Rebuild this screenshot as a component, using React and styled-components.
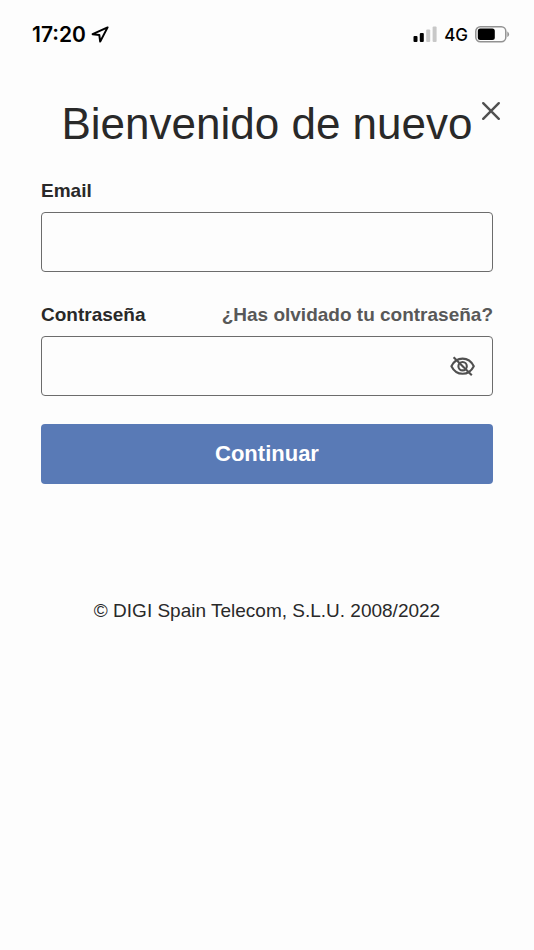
import React from "react";
import styled, { createGlobalStyle } from "styled-components";

const Global = createGlobalStyle`
  *, *::before, *::after { box-sizing: border-box; }
  body { margin: 0; background: #fdfdfd; color: #292929; font-family: "Liberation Sans", Arial, sans-serif; }
`;

const StatusBar = styled.header`
  display: flex;
  align-items: center;
  justify-content: space-between;
  padding: 23px 24px 21px 32px;
  color: #000;
  font-family: Inter, sans-serif;
`;

const StatusGroup = styled.div`
  display: flex;
  align-items: center;
  gap: ${(p) => p.$gap}px;
`;

const Clock = styled.time`
  font-size: 21px;
  line-height: 24px;
  font-weight: 600;
`;

const Network = styled.span`
  font-size: 17px;
  line-height: 24px;
  font-weight: 500;
`;

const Page = styled.main`
  padding: 32px 41px;
`;

const TitleRow = styled.div`
  position: relative;
`;

const Title = styled.h1`
  margin: 0;
  font-size: 44px;
  line-height: 48px;
  font-weight: 400;
  text-align: center;
  white-space: nowrap;
`;

const CloseButton = styled.button`
  position: absolute;
  top: 0;
  right: -8px;
  display: flex;
  padding: 0;
  border: 0;
  background: none;
  color: #505050;
  cursor: pointer;
`;

const Form = styled.form`
  display: flex;
  flex-direction: column;
  gap: 28px;
  margin-top: 28px;
`;

const Field = styled.div`
  display: flex;
  flex-direction: column;
  gap: 7px;
`;

const FieldHeader = styled.div`
  display: flex;
  justify-content: space-between;
  padding-top: 1px;
  font-size: 19px;
  line-height: 28px;
  font-weight: 700;
`;

const ForgotLink = styled.a`
  color: #585858;
  text-decoration: none;
`;

const InputFrame = styled.div`
  display: flex;
  align-items: center;
  height: 60px;
  padding-right: 16px;
  border: 1px solid #6c6c6c;
  border-radius: 4px;
`;

const Input = styled.input`
  flex: 1;
  min-width: 0;
  height: 100%;
  padding: 0 16px;
  border: 0;
  outline: 0;
  background: transparent;
  font: inherit;
  font-size: 19px;
`;

const IconButton = styled.button`
  display: flex;
  padding: 0;
  border: 0;
  background: none;
  color: #505050;
  cursor: pointer;
`;

const SubmitButton = styled.button`
  height: 60px;
  border: 0;
  border-radius: 4px;
  background: #597ab6;
  color: #fff;
  font: 700 22px/28px "Liberation Sans", Arial, sans-serif;
  cursor: pointer;
`;

const Footer = styled.footer`
  margin-top: 113px;
  font-size: 19px;
  line-height: 28px;
  text-align: center;
`;

function LocationIcon() {
  return (
    <svg width="18" height="18" viewBox="0 0 18 18" fill="none" stroke="currentColor" strokeWidth="2" strokeLinejoin="round" aria-hidden="true">
      <path d="M16.6 1.4 L1.6 8.2 L8.3 9 L9.2 15.6 Z" />
    </svg>
  );
}

function SignalIcon() {
  return (
    <svg width="24" height="18" viewBox="0 0 24 18" aria-hidden="true">
      <rect x="0.5" y="10" width="4" height="6" rx="1" />
      <rect x="6.8" y="7" width="4" height="9" rx="1" />
      <rect x="13.2" y="3.5" width="4" height="12.5" rx="1" fill="#c8c8c8" />
      <rect x="19.6" y="0.5" width="4" height="15.5" rx="1" fill="#c8c8c8" />
    </svg>
  );
}

function BatteryIcon() {
  return (
    <svg width="35" height="18" viewBox="0 0 35 18" aria-hidden="true">
      <rect x="0.8" y="0.8" width="30" height="15" rx="4.5" fill="none" stroke="#929292" strokeWidth="1.5" />
      <rect x="2.8" y="2.6" width="17" height="11.5" rx="2.5" />
      <path d="M32.3 5.5 C34.6 6.5 34.6 10.1 32.3 11.1 Z" fill="#929292" />
    </svg>
  );
}

function CloseIcon() {
  return (
    <svg width="20" height="22" viewBox="0 0 20 22" fill="none" stroke="currentColor" strokeWidth="2.4" strokeLinecap="round" aria-hidden="true">
      <path d="M2.2 3.2 L17.8 18.8 M17.8 3.2 L2.2 18.8" />
    </svg>
  );
}

function EyeOffIcon() {
  return (
    <svg width="26" height="22" viewBox="0 0 26 22" fill="none" stroke="currentColor" strokeWidth="2.1" strokeLinejoin="round" aria-hidden="true">
      <path d="M1.4 11.2 C6.5 1.1 18.7 1.1 23.8 11.2 C18.7 21.3 6.5 21.3 1.4 11.2 Z" />
      <circle cx="12.6" cy="11.2" r="4.2" />
      <path d="M3.6 2.2 L21.8 20.2" />
    </svg>
  );
}

export default function App() {
  return (
    <>
      <Global />
      <StatusBar>
        <StatusGroup $gap={5}>
          <Clock>17:20</Clock>
          <LocationIcon />
        </StatusGroup>
        <StatusGroup $gap={7}>
          <SignalIcon />
          <Network>4G</Network>
          <BatteryIcon />
        </StatusGroup>
      </StatusBar>
      <Page>
        <TitleRow>
          <Title>Bienvenido de nuevo</Title>
          <CloseButton type="button" aria-label="Cerrar">
            <CloseIcon />
          </CloseButton>
        </TitleRow>
        <Form onSubmit={(e) => e.preventDefault()}>
          <Field>
            <FieldHeader>
              <label htmlFor="email">Email</label>
            </FieldHeader>
            <InputFrame>
              <Input id="email" type="email" />
            </InputFrame>
          </Field>
          <Field>
            <FieldHeader>
              <label htmlFor="password">Contraseña</label>
              <ForgotLink href="#recuperar">¿Has olvidado tu contraseña?</ForgotLink>
            </FieldHeader>
            <InputFrame>
              <Input id="password" type="password" />
              <IconButton type="button" aria-label="Mostrar contraseña">
                <EyeOffIcon />
              </IconButton>
            </InputFrame>
          </Field>
          <SubmitButton type="submit">Continuar</SubmitButton>
        </Form>
        <Footer>© DIGI Spain Telecom, S.L.U. 2008/2022</Footer>
      </Page>
    </>
  );
}
